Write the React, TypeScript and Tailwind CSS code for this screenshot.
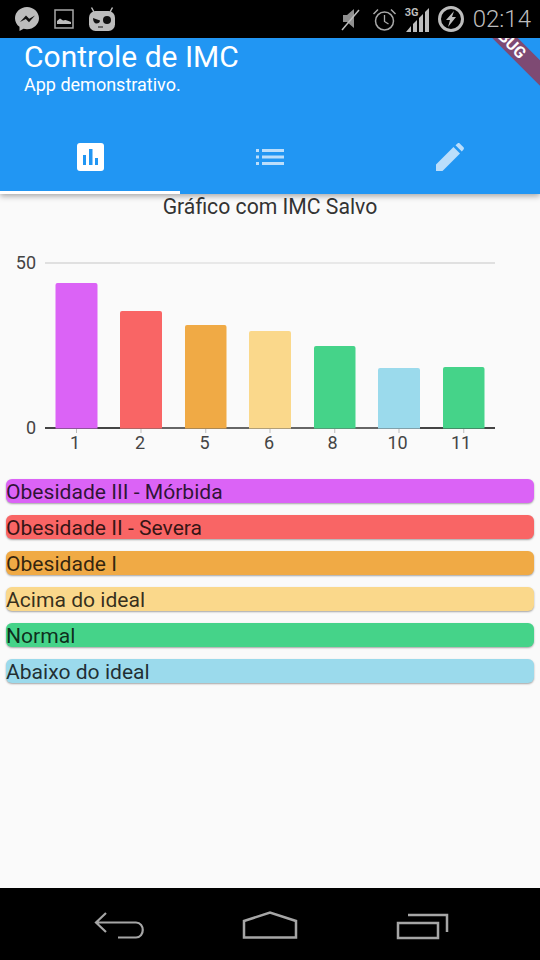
const bars = [
  { label: "1", x: 55.500, w: 42, top: 283, color: "#DB63F6", tx: 75 },
  { label: "2", x: 120, w: 42, top: 311, color: "#F96565", tx: 140 },
  { label: "5", x: 185, w: 41.500, top: 325, color: "#F0AA45", tx: 204.500 },
  { label: "6", x: 249, w: 42, top: 331, color: "#FAD88B", tx: 269 },
  { label: "8", x: 314, w: 41.500, top: 346, color: "#45D389", tx: 332.500 },
  { label: "10", x: 378, w: 42, top: 368, color: "#9BDAEC", tx: 397.500 },
  { label: "11", x: 443, w: 41.500, top: 367, color: "#45D389", tx: 461 },
];

const legend = [
  { name: "Obesidade III - Mórbida", color: "bg-[#DB63F6]" },
  { name: "Obesidade II - Severa", color: "bg-[#F96565]" },
  { name: "Obesidade I", color: "bg-[#F0AA45]" },
  { name: "Acima do ideal", color: "bg-[#FAD88B]" },
  { name: "Normal", color: "bg-[#45D389]" },
  { name: "Abaixo do ideal", color: "bg-[#9BDAEC]" },
];

function StatusBar() {
  return (
    <div className="h-[38px] bg-black flex items-center justify-between pl-[14px] pr-[9px] shrink-0">
      <div className="flex items-center gap-[14px]">
        {/* messenger */}
        <svg width="26" height="26" viewBox="0 0 26 26">
          <path d="M13 1C6.400 1 1 6 1 12.200c0 3.500 1.700 6.600 4.500 8.600V25l4-2.300c1.100.3 2.300.5 3.500.5 6.600 0 12-5 12-11S19.600 1 13 1z" fill="#BDBDBD" />
          <path d="M6 16l6-6.500 3.200 3.200L21 9.500l-6 6.700-3.200-3.300z" fill="#111" />
        </svg>
        {/* gallery */}
        <svg width="20" height="20" viewBox="0 0 20 20">
          <rect x="1" y="1" width="18" height="18" fill="none" stroke="#A8A8A8" strokeWidth="1.500" />
          <path d="M3 15v-3l3-2.500 3 2 2.500-.5 3 1 2.500 1v2z" fill="#BDBDBD" />
        </svg>
        {/* cyanogen mod mascot */}
        <svg width="28" height="28" viewBox="0 0 28 28">
          <path d="M6 7L3.500 2.500M22 7l2.500-4.500" stroke="#BDBDBD" strokeWidth="1.500" />
          <rect x="1" y="6" width="26" height="20" rx="6.500" fill="#BDBDBD" />
          <path d="M5 13l7 2.500c0 2-1.500 3-3.500 3S5 16.500 5 13z" fill="#111" />
          <circle cx="19" cy="15" r="4" fill="#111" />
          <path d="M10 22h5" stroke="#111" strokeWidth="1" />
        </svg>
      </div>
      <div className="flex items-center">
        <svg width="20" height="26" viewBox="0 0 20 26" className="mr-[11px]">
          <path d="M2 9h4l7-6v19l-7-6H2z" fill="#8F8F8F" />
          <path d="M1 24L18 4" stroke="#BDBDBD" strokeWidth="1.500" />
        </svg>
        <svg width="25" height="25" viewBox="0 0 25 25" className="mr-[8px]">
          <circle cx="12.500" cy="14" r="9" fill="none" stroke="#A8A8A8" strokeWidth="1.500" />
          <path d="M12.500 8v6.500l4 2.500" fill="none" stroke="#A8A8A8" strokeWidth="1.300" />
          <path d="M1.500 7L6 2.500M23.500 7L19 2.500" stroke="#A8A8A8" strokeWidth="1.500" />
        </svg>
        <div className="relative w-[25px] h-[26px] mr-[8px]">
          <span className="absolute left-0 top-0 text-[11px] leading-[13px] font-bold text-[#BDBDBD] font-['Roboto',sans-serif]">3G</span>
          <svg width="25" height="26" viewBox="0 0 25 26">
            <path d="M1 26L6 20v6zM8 26v-8l4-4v12zM14 26V12l4-4v18zM20 26V6l4-4v24z" fill="#BDBDBD" />
          </svg>
        </div>
        <svg width="26" height="26" viewBox="0 0 26 26" className="mr-[9px]">
          <circle cx="13" cy="13" r="11.500" fill="none" stroke="#BDBDBD" strokeWidth="3" />
          <path d="M16 5l-8 9h4l-2 7 8-10h-4z" fill="#BDBDBD" />
        </svg>
        <span className="text-[24px] leading-none text-[#BDBDBD] font-['Roboto',sans-serif] font-light">02:14</span>
      </div>
    </div>
  );
}

function AppBar() {
  return (
    <div className="relative h-[156px] bg-[#2196F3] overflow-hidden shadow-[0_2px_6px_rgba(0,0,0,0.35)] z-10 shrink-0 flex flex-col">
      <div className="pl-[24px] h-[94px] text-white">
        <div className="text-[30px] leading-[38px]">Controle de IMC</div>
        <div className="text-[18px] leading-[18px]">App demonstrativo.</div>
      </div>
      <div className="flex h-[62px]">
        <div className="w-[180px] flex items-center justify-center pb-[4px] border-b-[3px] border-white">
          <span className="w-[27px] h-[28px] bg-white rounded-[3px] flex items-center justify-center mb-[5px]">
            <svg width="15" height="16" viewBox="0 0 15 16">
              <path d="M0 6h3v10H0zM6 0h3.500v16H6zM12 9h3v7h-3z" fill="#2196F3" />
            </svg>
          </span>
        </div>
        <div className="w-[180px] flex items-center justify-center pb-[12px]">
          <svg width="28" height="16" viewBox="0 0 28 16">
            <path d="M0 0h3v3H0zM0 6.500h3v3H0zM0 13h3v3H0zM6 0h22v3H6zM6 6.500h22v3H6zM6 13h22v3H6z" fill="#BBDEFB" />
          </svg>
        </div>
        <div className="w-[180px] flex items-center justify-center pb-[12px]">
          <svg width="28" height="28" viewBox="0 0 28 28">
            <path d="M0 28v-6.500L17.500 4l6.500 6.500L6.500 28zM19.500 2.200L21.500.5c.7-.6 1.500-.6 2.200 0l3.800 3.800c.6.7.6 1.500 0 2.200l-1.700 2z" fill="#BBDEFB" />
          </svg>
        </div>
      </div>
      {/* debug banner */}
      <div className="absolute left-[445px] top-[-9px] w-[120px] h-[18px] bg-[#7E4A73] rotate-45 flex items-center justify-center text-white text-[16px] font-bold leading-none font-['Roboto',sans-serif]">
        DEBUG
      </div>
    </div>
  );
}

function Chart() {
  // viewBox uses page coordinates, the chart starts at y = 224
  const y0 = 224;
  return (
    <svg width="540" height="236" viewBox={`0 ${y0} 540 236`} className="block">
      <line x1="45" x2="495" y1="263" y2="263" stroke="#E8E8E8" strokeWidth="2" />
      <line x1="45" x2="120" y1="263" y2="263" stroke="#E0E0E0" strokeWidth="2" />
      <line x1="420" x2="495" y1="263" y2="263" stroke="#E0E0E0" strokeWidth="2" />
      <text x="36" y="269" textAnchor="end" fontSize="18" fill="#444" fontFamily="Roboto">50</text>
      <text x="36" y="434" textAnchor="end" fontSize="18" fill="#444" fontFamily="Roboto">0</text>
      <line x1="45" x2="495" y1="428" y2="428" stroke="#666" strokeWidth="2" />
      <line x1="45" x2="120" y1="428" y2="428" stroke="#444" strokeWidth="2" />
      <line x1="420" x2="495" y1="428" y2="428" stroke="#444" strokeWidth="2" />
      {bars.map((b) => (
        <g key={b.label}>
          <path d={`M${b.x} 428.500V${b.top + 2}q0-2 2-2H${b.x + b.w - 2}q2 0 2 2V428.500z`} fill={b.color} />
          <line x1={b.x + b.w / 2} x2={b.x + b.w / 2} y1="429" y2="433" stroke="#BBB" strokeWidth="1" />
          <text x={b.tx} y="449" textAnchor="middle" fontSize="18" fill="#444" fontFamily="Roboto">{b.label}</text>
        </g>
      ))}
    </svg>
  );
}

export default function App() {
  return (
    <div className="w-[540px] h-[960px] flex flex-col bg-[#FAFAFA] overflow-hidden font-['Roboto',sans-serif]">
      <StatusBar />
      <AppBar />
      <div className="flex-1 flex flex-col">
        <div className="text-center text-[21.2px] leading-[26px] text-[#333] h-[30px]">Gráfico com IMC Salvo</div>
        <Chart />
        <div className="flex flex-col gap-[12px] px-[6px] mt-[19px]">
          {legend.map((l) => (
            <div key={l.name} className={`h-[24px] rounded-[6px] shadow-[0_1px_2px_rgba(0,0,0,0.35)] text-[21.100px] leading-[26px] text-black/80 ${l.color}`}>
              {l.name}
            </div>
          ))}
        </div>
      </div>
      <div className="h-[72px] bg-black shrink-0">
        <svg width="540" height="72" viewBox="0 0 540 72" fill="none" stroke="#A6A6A6" strokeWidth="2.500">
          <path d="M106 25l-10 9.500 10 9.500M97 34.500h39c9 0 9 15 0 15h-18" strokeWidth="2.200" />
          <path d="M244 33L270 24.500l26 8.500V49.500h-52z" />
          <path d="M398 35h40v15h-40zM408 27h39v17" />
        </svg>
      </div>
    </div>
  );
}
